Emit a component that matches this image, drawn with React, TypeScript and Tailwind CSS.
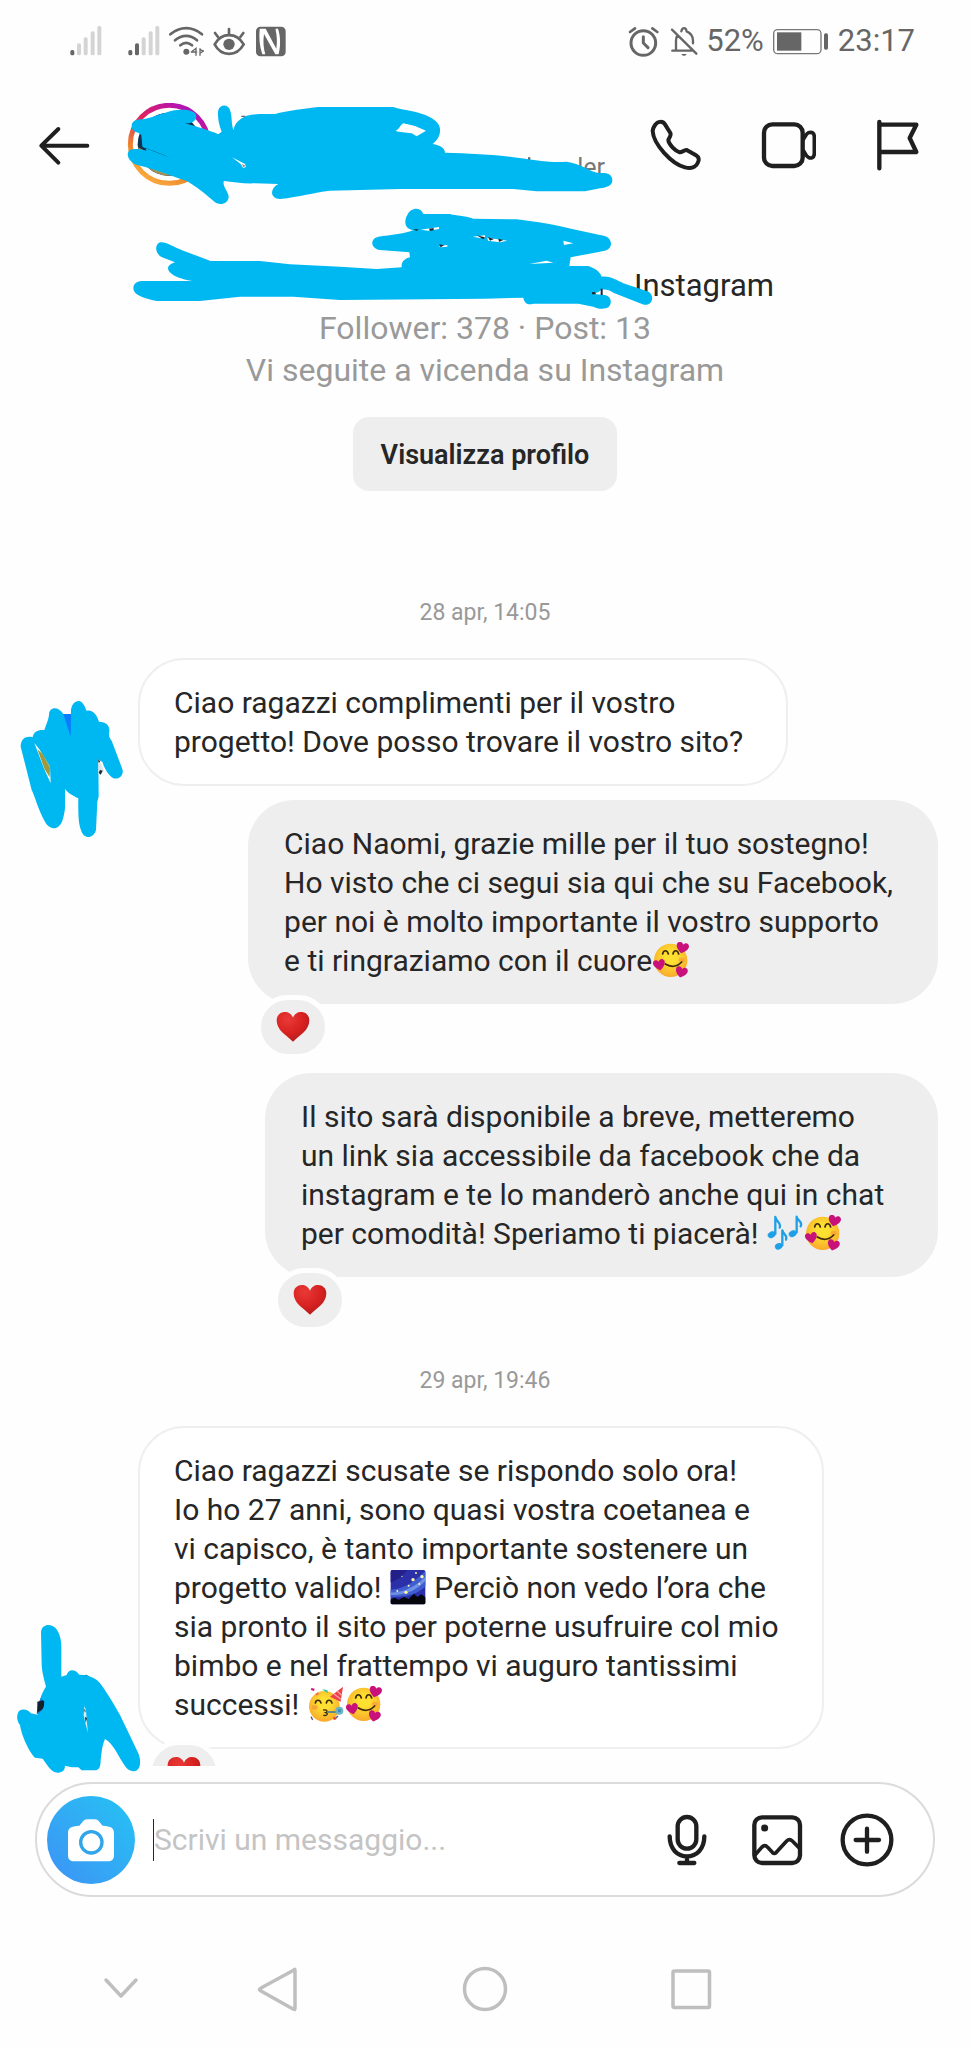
import React from "react";

const BLUE = "#00b8f1";

function StatusBar() {
  const bars = [
    [217, 148],
    [237, 128],
    [257, 110],
    [278, 92],
    [298, 76],
  ];
  const Signal = ({ strong }: { strong: number }) => (
    <svg viewBox="204 70 108 102" className="h-[34px] w-9" aria-hidden="true">
      {bars.map(([x, top], i) => (
        <rect key={x} x={x - 6} y={top} width={12} height={164 - top} rx={5} fill={i < strong ? "#666" : "#d4d4d4"} />
      ))}
    </svg>
  );
  return (
    <div className="flex h-[82px] items-center justify-between pl-[68px] pr-[55px] text-[31px] leading-[34px] text-[#666]">
      <div className="flex items-center gap-[6px]">
        <Signal strong={1} />
        <span className="w-[10px]" />
        <Signal strong={2} />
        <svg viewBox="504 70 108 102" className="h-[34px] w-9" fill="none" stroke="#666" strokeWidth="8" strokeLinecap="round" aria-hidden="true">
          <path d="M511 101C540 76 577 76 606 101M525 119C546 101 571 101 591 119M541 134C552 125 565 125 576 134" />
          <circle cx="559" cy="153" r="9" fill="#666" stroke="none" />
          <path d="M574 154L588 143V164M574 154H590M600 144V164M600 147L611 151L601 157" strokeWidth="4" />
        </svg>
        <svg viewBox="630 70 108 102" className="h-[34px] w-9" fill="none" stroke="#666" strokeWidth="8" strokeLinecap="round" aria-hidden="true">
          <path d="M644 131C664 94 710 94 731 131C710 169 664 169 644 131Z" />
          <circle cx="687" cy="131" r="17" fill="#666" stroke="none" />
          <path d="M687 85V100M645 97L654 109M730 97L721 109" />
        </svg>
        <svg viewBox="756 70 108 102" className="h-[34px] w-9" aria-hidden="true">
          <rect x="768" y="78" width="89" height="89" rx="13" fill="#666" />
          <path d="M779 84H797L829 144C832 124 831 104 826 84H834C842 108 842 134 836 161H826L792 100C789 122 790 142 796 161H787C778 136 777 110 779 84Z" fill="#fff" />
          <path d="M803 84L826 128V84ZM796 128L816 161H796Z" fill="#666" />
        </svg>
      </div>
      <div className="flex items-center gap-1">
        <svg viewBox="423 70 108 102" className="h-[34px] w-9" fill="none" stroke="#666" strokeWidth="9" strokeLinecap="round" aria-hidden="true">
          <circle cx="475" cy="127" r="37" />
          <path d="M475 108V127L489 141" />
          <path d="M435 94L450 83M502 83L517 94" strokeWidth="8" />
        </svg>
        <svg viewBox="543 70 108 102" className="h-[34px] w-9" fill="none" stroke="#666" strokeWidth="7" strokeLinecap="round" aria-hidden="true">
          <path d="M561 87L634 159M562 150H620M573 149V120C573 113 574 108 577 104M589 92C592 79 603 79 605 92C617 97 624 107 624 120V128" />
          <path d="M589 160C592 167 602 167 605 160Z" fill="#666" stroke="none" />
        </svg>
        <span>52%</span>
        <svg viewBox="846 70 192 102" className="mr-0.5 h-[34px] w-16" aria-hidden="true">
          <rect x="863" y="87" width="142" height="72" rx="12" fill="none" stroke="#777" strokeWidth="4" />
          <rect x="873" y="95" width="73" height="55" fill="#666" />
          <rect x="1014" y="98" width="12" height="49" rx="5" fill="#666" />
        </svg>
        <span>23:17</span>
      </div>
    </div>
  );
}

function Header() {
  return (
    <header className="relative flex h-[126px] items-center pl-[35px] pr-11">
      <button aria-label="Indietro" className="shrink-0">
        <svg viewBox="105 354 180 168" className="h-14 w-[60px]" fill="none" stroke="#1f1f1f" strokeWidth="12" strokeLinecap="round" strokeLinejoin="round">
          <path d="M124 440H262M175 390L124 440L175 491" />
        </svg>
      </button>
      <svg viewBox="0 0 252 252" className="ml-8 h-[84px] w-[84px] shrink-0" aria-hidden="true">
        <defs>
          <linearGradient id="ring" x1="0.2" y1="1" x2="0.8" y2="0">
            <stop offset="0" stopColor="#fbb040" />
            <stop offset="0.25" stopColor="#ee8a2c" />
            <stop offset="0.6" stopColor="#e0245e" />
            <stop offset="0.85" stopColor="#c0169c" />
            <stop offset="1" stopColor="#a512c8" />
          </linearGradient>
        </defs>
        <circle cx="127" cy="124" r="117" fill="#fff" stroke="url(#ring)" strokeWidth="15" />
        <circle cx="127" cy="124" r="95" fill="#12304f" />
        <path d="M60 57A95 95 0 0 1 190 53L120 80Z" fill="#0a7cff" />
        <path d="M33 133C80 160 120 165 190 195A95 95 0 0 1 33 133Z" fill="#a89450" />
      </svg>
      <div className="flex flex-1 flex-col pr-[41px] pt-[46px] text-right text-[25px] leading-[30px] text-[#777]">
        <span>ler</span>
      </div>
      <div className="flex shrink-0 gap-[50px]">
        <button aria-label="Chiama">
          <svg viewBox="483 345 180 180" className="h-[60px] w-[60px]" fill="none" stroke="#1f1f1f" strokeWidth="12" strokeLinecap="round" strokeLinejoin="round">
            <path d="M511 374C518 364 533 362 540 373L556 399C560 407 552 412 550 420C551 433 571 453 584 457C592 458 596 449 605 450L633 466C643 472 643 481 638 489C631 504 616 506 600 502C560 492 505 432 503 393C503 386 507 380 511 374Z" />
          </svg>
        </button>
        <button aria-label="Videochiamata">
          <svg viewBox="813 345 180 180" className="h-[60px] w-[60px]" fill="none" stroke="#1f1f1f" strokeWidth="13" strokeLinejoin="round">
            <rect x="837" y="373" width="116" height="125" rx="25" />
            <path d="M954 419C961 412 963 400 970 398C982 395 988 399 988 412V460C988 474 978 476 970 472C962 469 961 458 954 451" strokeWidth="11" />
          </svg>
        </button>
        <button aria-label="Segnala">
          <svg viewBox="1143 345 180 180" className="h-[60px] w-[60px]" fill="none" stroke="#1f1f1f" strokeWidth="13" strokeLinecap="round" strokeLinejoin="round">
            <path d="M1183 366V505M1183 374H1294L1274 414L1294 456H1183" />
          </svg>
        </button>
      </div>
      <svg viewBox="0 246 1860 378" className="pointer-events-none absolute left-0 top-0 h-[126px] w-[620px]" aria-hidden="true">
        <path d="M724 347H736V351H724ZM1584 472H1591V490H1584Z" fill="#666" />
        <path
          fill={BLUE}
          d="M395 378C395 362 410 358 430 358C460 350 485 342 505 335C530 326 590 325 589 350C586 368 570 370 555 370C590 380 630 392 655 403L665 395C655 370 652 345 655 330C660 312 685 312 690 330C697 350 693 365 700 390C705 370 715 358 740 347C770 340 800 343 825 342C860 332 920 325 955 321H1180C1210 332 1255 332 1290 352C1315 365 1322 380 1320 395C1318 415 1305 425 1298 432C1320 435 1335 445 1335 458C1400 460 1480 463 1530 470C1600 478 1640 489 1700 485C1740 490 1770 515 1800 520C1830 515 1837 530 1837 542C1837 555 1820 563 1800 565L1755 574H1610L1540 567H1200L990 572C940 578 900 590 840 597C810 597 808 565 835 552L765 550C730 552 700 545 672 543C665 555 685 575 686 590C685 612 660 617 645 607C620 585 590 560 560 543C520 530 460 505 420 497C385 490 375 460 390 450C400 445 420 447 440 452L505 470L427 440L424 405L415 398C400 395 395 388 395 378Z"
        />
        <path d="M424 400L445 404L430 442L505 471L440 456Z" fill={BLUE} />
        <path d="M1187 392C1198 388 1200 376 1210 370L1245 378L1278 392L1250 409L1235 400C1215 396 1200 398 1187 392ZM696 472L735 492L738 500L730 505L722 492Z" fill="#fff" />
        <path d="M725 492L737 497L731 502Z" fill="#888" />
      </svg>
    </header>
  );
}

function Profile() {
  return (
    <section className="relative flex flex-col items-center pt-[57px] text-[32px] leading-[42px] text-[#999]">
      <p className="flex text-[31px] text-[#262626]">
        <span className="w-[438px]" />
        Instagram
      </p>
      <p>Follower: 378 · Post: 13</p>
      <p>Vi seguite a vicenda su Instagram</p>
      <button className="mt-[26px] h-[74px] rounded-2xl bg-[#eeeeee] px-7 pt-0.5 text-[27px] font-semibold text-[#262626]">
        Visualizza profilo
      </button>
      <svg viewBox="375 624 2160 306" className="pointer-events-none absolute inset-x-0 top-0 mx-auto h-[102px] w-[720px]" aria-hidden="true">
        <path
          fill={BLUE}
          d="M400 865C400 848 415 843 430 843H575C545 838 505 825 504 805C505 795 515 790 525 787L490 773C465 765 462 735 480 727C500 725 520 742 550 752L632 783H780L870 793L1020 800L1130 807L1205 802C1203 785 1215 775 1230 772L1228 757L1140 750C1110 745 1110 715 1135 710C1170 705 1220 700 1240 690C1212 688 1212 660 1222 645C1232 622 1262 620 1270 642H1350C1370 648 1390 646 1420 656L1550 658C1610 665 1670 675 1720 688L1800 705C1825 708 1833 718 1833 733C1830 752 1815 752 1800 755L1712 772L1708 798H1765C1785 805 1800 815 1805 830C1830 828 1850 840 1870 850L1940 873C1960 880 1960 900 1950 910C1940 917 1930 915 1920 910L1840 878C1825 868 1805 865 1797 875L1780 882L1815 885C1835 890 1837 910 1825 922C1810 930 1790 925 1780 920L1735 911H1600C1580 918 1572 905 1570 893L1455 896L1020 900L880 890H780L720 890L600 903H470C430 895 400 885 400 865Z"
        />
        <path d="M1262 689L1317 681V687L1285 692ZM1317 738L1342 735V740L1322 742ZM1418 710L1455 706V714L1440 714ZM1462 713L1522 722L1500 727L1464 722ZM1690 722L1720 730L1692 735ZM1588 792L1640 782L1660 788Z" fill="#fff" />
        <path d="M1240 688H1256L1250 693ZM1287 686L1301 684V691L1290 693ZM1317 733L1332 736L1322 742ZM1430 706L1455 712L1450 718ZM1464 712L1482 717L1470 722ZM1495 716L1510 720L1497 726ZM1776 877L1785 876L1788 883H1776ZM1802 866H1808V885H1802Z" fill="#1c2b33" />
      </svg>
    </section>
  );
}

const EMOJI = "mx-px inline-block size-9 align-[-7px]";

function FaceFill() {
  return (
    <radialGradient id="face" cx="0.5" cy="0.4" r="0.6">
      <stop offset="0.3" stopColor="#fde030" />
      <stop offset="1" stopColor="#f9a92b" />
    </radialGradient>
  );
}

function HeartsFace() {
  const heart = "M0 10C-9 4-12-1-11-6C-9-12-2-11 0-6C2-11 9-12 11-6C12-1 9 4 0 10Z";
  return (
    <svg viewBox="0 0 108 108" className={EMOJI} role="img" aria-label="🥰">
      <defs>
        <FaceFill />
      </defs>
      <circle cx="53" cy="55" r="50" fill="url(#face)" />
      <ellipse cx="86" cy="54" rx="9" ry="7" fill="#f78a3c" opacity="0.5" />
      <path d="M29 36C31 23 43 23 46 36M60 36C62 23 74 23 77 36" fill="none" stroke="#422b0d" strokeWidth="5" strokeLinecap="round" />
      <path d="M37 66C52 76 72 76 86 60" fill="none" stroke="#422b0d" strokeWidth="5" strokeLinecap="round" />
      <path d={heart} fill="#c8117a" transform="translate(88 18) rotate(14) scale(1.65)" />
      <path d={heart} fill="#c8117a" transform="translate(19 69) rotate(-12) scale(1.6)" />
      <path d={heart} fill="#c8117a" transform="translate(85 91) rotate(14) scale(1.6)" />
    </svg>
  );
}

function PartyFace() {
  return (
    <svg viewBox="0 0 108 108" className={EMOJI} role="img" aria-label="🥳">
      <defs>
        <FaceFill />
      </defs>
      <circle cx="49" cy="61" r="46" fill="url(#face)" />
      <ellipse cx="20" cy="64" rx="9" ry="7" fill="#f78a3c" opacity="0.6" />
      <path d="M66 32L105 2L98 47Z" fill="#ee3f4b" />
      <path d="M78 24L99 40M88 16L101 28" stroke="#f9a1a5" strokeWidth="4" />
      <path d="M22 51C24 40 36 40 39 51M55 51C57 40 69 40 72 51" fill="none" stroke="#422b0d" strokeWidth="5" strokeLinecap="round" />
      <path d="M47 72C58 70 60 77 53 80C62 82 58 90 47 88" fill="none" stroke="#422b0d" strokeWidth="4" strokeLinecap="round" />
      <path d="M58 78H92" stroke="#3b7f9c" strokeWidth="5" />
      <circle cx="94" cy="74" r="12" fill="#6fb3c4" />
      <circle cx="94" cy="74" r="5" fill="#3b8eb3" />
      <path d="M42 10L58 12L60 22L50 16Z" fill="#3fc6a5" />
      <path d="M10 6L20 8L18 15L9 12Z" fill="#c8117a" />
      <path d="M22 24L30 19L33 25L25 29Z" fill="#f2705a" />
      <path d="M9 92L14 102M84 96L90 90" stroke="#555a8a" strokeWidth="4" />
      <circle cx="80" cy="97" r="5" fill="#e8503a" />
    </svg>
  );
}

function Notes() {
  return (
    <svg viewBox="0 0 108 108" className={EMOJI} role="img" aria-label="🎶">
      <g fill="#1e9fe6" stroke="#1e9fe6" strokeLinecap="round" strokeLinejoin="round">
        <ellipse cx="14" cy="59" rx="12" ry="9" transform="rotate(-25 14 59)" />
        <ellipse cx="77" cy="56" rx="12" ry="9" transform="rotate(-25 77 56)" />
        <ellipse cx="35" cy="94" rx="11" ry="9" transform="rotate(-25 35 94)" />
        <path d="M25 56V6C28 22 44 22 38 38M89 52V5C92 20 108 18 101 34M46 91V46C49 60 62 58 57 74" fill="none" strokeWidth="7" />
      </g>
    </svg>
  );
}

function Galaxy() {
  return (
    <svg viewBox="0 0 108 108" className={EMOJI} role="img" aria-label="🌌">
      <defs>
        <clipPath id="sky">
          <rect x="2" y="3" width="104" height="103" rx="5" />
        </clipPath>
      </defs>
      <g clipPath="url(#sky)">
        <rect width="108" height="108" fill="#2b2fa8" />
        <path d="M0 62C45 60 70 40 108 4V52C80 76 50 86 0 84Z" fill="#3f5cd0" />
        <path d="M0 71C48 70 76 52 108 22V34C80 64 48 80 0 78Z" fill="#8fb4f0" opacity="0.6" />
        <path d="M0 0H55C40 20 20 36 0 40Z" fill="#23208a" />
        <g fill="#fff6a0">
          <circle cx="69" cy="32" r="5" />
          <circle cx="96" cy="23" r="5" />
          <circle cx="48" cy="70" r="5" />
          <circle cx="78" cy="12" r="3" />
          <circle cx="56" cy="50" r="3" />
          <circle cx="88" cy="45" r="3" />
          <circle cx="36" cy="22" r="2" />
          <circle cx="22" cy="66" r="3" />
        </g>
        <path d="M0 92L14 86L26 92L42 84L56 90L72 74L82 84L94 76L108 86V108H0Z" fill="#05060c" />
      </g>
    </svg>
  );
}

function Reaction() {
  return (
    <span className="flex h-16 w-[74px] shrink-0 items-center justify-center rounded-full border-[5px] border-[#fefefe] bg-[#eeeeee]">
      <svg viewBox="0 0 102 96" className="h-8 w-[34px]" role="img" aria-label="❤️">
        <defs>
          <radialGradient id="heart" cx="0.35" cy="0.25" r="0.8">
            <stop offset="0" stopColor="#e93a38" />
            <stop offset="0.6" stopColor="#d6211f" />
            <stop offset="1" stopColor="#b01c1e" />
          </radialGradient>
        </defs>
        <path d="M51 92C30 72 2 58 2 28C2 -2 42 -6 51 20C60 -6 100 -2 100 28C100 58 72 72 51 92Z" fill="url(#heart)" />
      </svg>
    </span>
  );
}

function Received({ children, scribble, reacted }: { children: React.ReactNode; scribble: React.ReactNode; reacted?: boolean }) {
  return (
    <div className="relative flex pl-[138px]">
      {scribble}
      <div className="flex flex-col items-start">
        <div className="rounded-[46px] border-2 border-[#efefef] bg-white py-[23px] pl-[34px] pr-[43px] text-[30px] leading-[39px]">{children}</div>
        {reacted && (
          <div className="relative -mt-[9px] ml-[9px] h-[26px] overflow-hidden">
            <Reaction />
          </div>
        )}
      </div>
    </div>
  );
}

function Sent({ children }: { children: React.ReactNode }) {
  return (
    <div className="flex justify-end pr-8">
      <div className="flex min-w-[673px] flex-col items-start">
        <div className="w-full rounded-[46px] bg-[#eeeeee] py-6 pl-9 pr-[45px] text-[30px] leading-[39px]">{children}</div>
        <div className="relative -mt-[9px] ml-2">
          <Reaction />
        </div>
      </div>
    </div>
  );
}

function Scribble1() {
  return (
    <svg viewBox="0 330 414 450" className="pointer-events-none absolute left-0 top-8 h-[150px] w-[138px]" aria-hidden="true">
      <path
        fill={BLUE}
        d="M62 500C62 480 75 466 98 472C100 455 115 448 133 450C140 430 145 420 147 405C147 380 175 378 190 402L213 404C210 375 225 362 237 363C252 366 255 385 260 392C275 388 290 400 297 425C320 425 330 438 328 455C325 470 330 475 335 482L368 570C370 590 355 598 340 595C325 585 315 570 307 545L295 540L296 650L292 665L288 750C280 778 250 778 243 750C237 735 234 715 235 655C215 645 205 640 195 627V685C190 720 185 740 165 745C150 745 140 735 135 725C115 690 105 650 95 630Z"
      />
      <path d="M190 402L213 402L212 470Z" fill="#0a7cff" />
      <path d="M103 489L118 508L150 560L152 610L134 570Z" fill="#fff" />
      <path d="M112 508L128 522L150 562L149 592L134 568Z" fill="#a09a3c" />
      <path d="M295 536L307 560L312 572L300 585L295 580Z" fill="#dde6ec" />
      <path d="M294 537L301 545L296 548ZM300 570L308 572L302 584L296 578Z" fill="#1c2b33" />
    </svg>
  );
}

function Scribble2() {
  return (
    <svg viewBox="0 660 435 480" className="pointer-events-none absolute left-0 top-[194px] h-40 w-[145px]" aria-hidden="true">
      <path d="M110 942C112 900 135 860 170 838L260 824L300 850L200 960Z" fill="#1486d8" />
      <path d="M112 905L132 900V925L112 938Z" fill="#14202e" />
      <path
        fill={BLUE}
        d="M123 700C123 680 135 675 148 675C170 677 184 705 184 740V830L200 825C205 806 225 806 238 824C270 826 290 835 300 850C330 890 345 920 360 945L415 1060C425 1085 422 1112 402 1114C385 1112 380 1105 375 1098C355 1070 340 1030 315 1017C305 1040 305 1060 302 1080C302 1105 295 1110 285 1111H245L235 1102H215L195 1097C195 1112 185 1118 172 1118C155 1115 150 1105 145 1100L128 1076L105 1073C90 1060 65 1010 60 975C48 960 50 940 58 932C70 925 85 930 93 940L112 944C125 935 132 925 134 905L122 895C126 880 132 868 138 860C130 830 125 810 125 790Z"
      />
      <path d="M253 918L258 930L260 960L264 998L256 970L251 945Z" fill="#d8edf5" />
      <path d="M252 926L257 932L255 938ZM255 950L261 955L257 968Z" fill="#1c2b33" />
    </svg>
  );
}

function Composer() {
  return (
    <form className="mx-[35px] mt-4 flex h-[115px] items-center rounded-full border-2 border-[#dbdbdb] bg-white pl-[10px] pr-[38px]" onSubmit={(e) => e.preventDefault()}>
      <button type="button" aria-label="Fotocamera" className="flex size-22 shrink-0 items-center justify-center rounded-full bg-linear-to-tr from-[#3c92f5] to-[#22c3f3]">
        <svg viewBox="204 170 138 132" className="h-11 w-[46px]">
          <path d="M204 216C204 200 212 195 238 193C248 184 250 174 262 174H284C296 174 298 184 308 193C334 195 342 200 342 216V280C342 294 336 300 322 300H224C210 300 204 294 204 280Z" fill="#fff" />
          <circle cx="274" cy="243" r="32" fill="none" stroke="#31a5ea" strokeWidth="10" />
        </svg>
      </button>
      <span className="ml-[18px] h-[42px] w-px shrink-0 bg-[#262626]" />
      <input
        type="text"
        aria-label="Scrivi un messaggio"
        placeholder="Scrivi un messaggio..."
        className="h-[60px] min-w-0 flex-1 bg-transparent text-[30px] text-[#262626] outline-none placeholder:text-[#c4c4c4]"
      />
      <div className="flex shrink-0 gap-[34px]">
        <button type="button" aria-label="Messaggio vocale">
          <svg viewBox="518 156 168 168" className="size-14" fill="none" stroke="#1f1f1f" strokeWidth="13" strokeLinecap="round">
            <rect x="574" y="171" width="56" height="95" rx="28" />
            <path d="M550 229C550 268 574 289 602 289C630 289 654 268 654 229M602 289V308M579 309H624" />
          </svg>
        </button>
        <button type="button" aria-label="Galleria">
          <svg viewBox="790 156 168 168" className="size-14" fill="none" stroke="#1f1f1f" strokeWidth="13" strokeLinejoin="round">
            <rect x="806" y="172" width="137" height="137" rx="23" />
            <path d="M808 285L828 262C835 255 840 255 846 262L860 277C864 281 868 281 872 277L903 243C909 237 914 237 920 243L942 265" strokeWidth="11" />
            <circle cx="837" cy="204" r="10.5" fill="#1f1f1f" stroke="none" />
          </svg>
        </button>
        <button type="button" aria-label="Altro">
          <svg viewBox="1062 156 168 168" className="size-14" fill="none" stroke="#1f1f1f" strokeWidth="13" strokeLinecap="round">
            <circle cx="1146" cy="240" r="73" />
            <path d="M1146 206V275M1112 240H1182" />
          </svg>
        </button>
      </div>
    </form>
  );
}

function NavBar() {
  const icon = "size-12";
  return (
    <nav className="flex items-center pb-[34px] pl-[10%] pt-[68px]">
      <button aria-label="Chiudi tastiera" className="mr-[108px]">
        <svg viewBox="0 0 48 48" className={icon} fill="none" stroke="#bfbfbf" strokeWidth="3.5" strokeLinecap="round" strokeLinejoin="round">
          <path d="M9 15L24 31L39 15" />
        </svg>
      </button>
      <div className="flex gap-[160px]">
        <button aria-label="Indietro (sistema)">
          <svg viewBox="0 0 48 48" className={icon} fill="none" stroke="#bfbfbf" strokeWidth="3.5" strokeLinejoin="round">
            <path d="M41 5C42 4 42 4 42 6V43C42 45 42 45 40 44L8 26C6 25 6 24 8 23Z" />
          </svg>
        </button>
        <button aria-label="Home">
          <svg viewBox="0 0 48 48" className={icon} fill="none" stroke="#bfbfbf" strokeWidth="3.5">
            <circle cx="24" cy="24" r="20.5" />
          </svg>
        </button>
        <button aria-label="App recenti">
          <svg viewBox="0 0 48 48" className={icon} fill="none" stroke="#bfbfbf" strokeWidth="3.5">
            <rect x="4" y="6" width="36.5" height="36.5" rx="1.5" />
          </svg>
        </button>
      </div>
    </nav>
  );
}

export default function App() {
  return (
    <div className="min-h-screen overflow-hidden bg-[#fefefe] font-['Roboto',sans-serif] text-[#262626]">
      <StatusBar />
      <Header />
      <Profile />
      <main>
        <p className="mt-[108px] text-center text-[23px] leading-[28px] text-[#999]">28 apr, 14:05</p>
        <div className="mt-[31px] flex flex-col gap-[14px]">
          <Received scribble={<Scribble1 />}>
            Ciao ragazzi complimenti per il vostro
            <br />
            progetto! Dove posso trovare il vostro sito?
          </Received>
          <Sent>
            Ciao Naomi, grazie mille per il tuo sostegno!
            <br />
            Ho visto che ci segui sia qui che su Facebook,
            <br />
            per noi è molto importante il vostro supporto
            <br />e ti ringraziamo con il cuore
            <HeartsFace />
          </Sent>
          <Sent>
            Il sito sarà disponibile a breve, metteremo
            <br />
            un link sia accessibile da facebook che da
            <br />
            instagram e te lo manderò anche qui in chat
            <br />
            per comodità! Speriamo ti piacerà! <Notes />
            <HeartsFace />
          </Sent>
        </div>
        <p className="mt-[35px] text-center text-[23px] leading-[28px] text-[#999]">29 apr, 19:46</p>
        <div className="mt-[31px]">
          <Received scribble={<Scribble2 />} reacted>
            Ciao ragazzi scusate se rispondo solo ora!
            <br />
            Io ho 27 anni, sono quasi vostra coetanea e
            <br />
            vi capisco, è tanto importante sostenere un
            <br />
            progetto valido! <Galaxy /> Perciò non vedo l’ora che
            <br />
            sia pronto il sito per poterne usufruire col mio
            <br />
            bimbo e nel frattempo vi auguro tantissimi
            <br />
            successi! <PartyFace />
            <HeartsFace />
          </Received>
        </div>
      </main>
      <Composer />
      <NavBar />
    </div>
  );
}
